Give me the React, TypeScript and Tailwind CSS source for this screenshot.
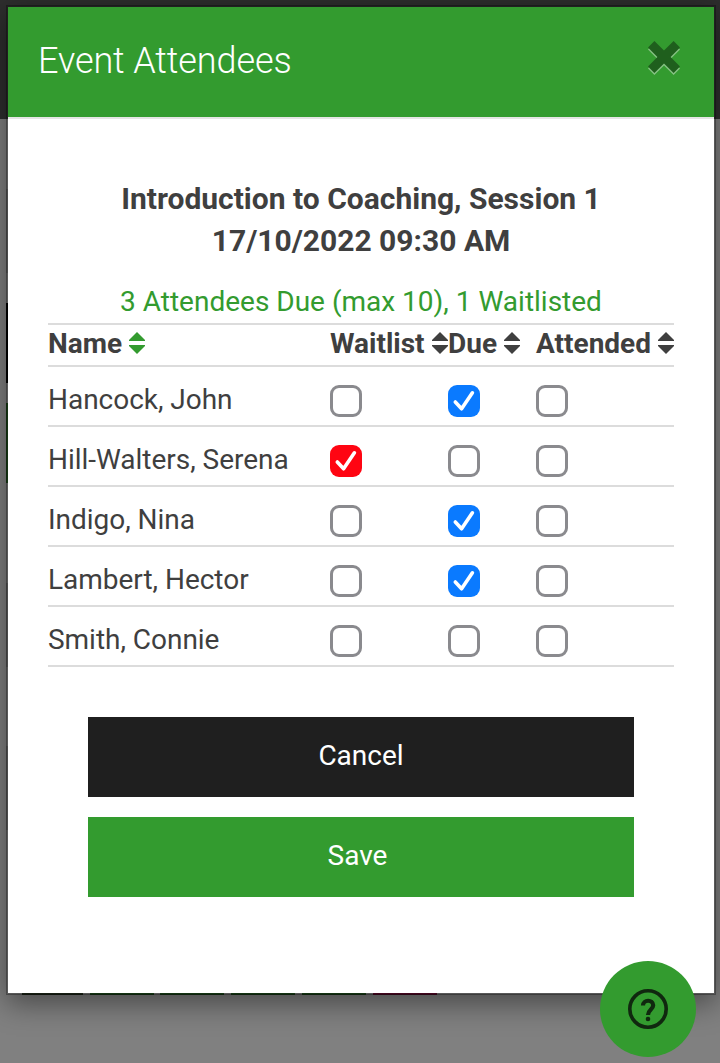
import { useState } from 'react';
import clsx from 'clsx';

type Field = 'waitlist' | 'due' | 'attended';

type Attendee = {
  name: string;
  waitlist: boolean;
  due: boolean;
  attended: boolean;
};

const initialAttendees: Attendee[] = [
  { name: 'Hancock, John', waitlist: false, due: true, attended: false },
  { name: 'Hill-Walters, Serena', waitlist: true, due: false, attended: false },
  { name: 'Indigo, Nina', waitlist: false, due: true, attended: false },
  { name: 'Lambert, Hector', waitlist: false, due: true, attended: false },
  { name: 'Smith, Connie', waitlist: false, due: false, attended: false },
];

function SortIcon({ className }: { className?: string }) {
  return (
    <svg
      viewBox="0 0 16 22"
      fill="currentColor"
      className={clsx('-mt-0.5 h-[22px] w-4 shrink-0', className)}
    >
      <path d="M8 0 16 8V9H0V8Z" />
      <path d="M8 22 16 14V13H0V14Z" />
    </svg>
  );
}

function Checkbox({
  checked,
  color = 'blue',
  label,
  onChange,
}: {
  checked: boolean;
  color?: 'blue' | 'red';
  label: string;
  onChange: () => void;
}) {
  return (
    <button
      role="checkbox"
      aria-checked={checked}
      aria-label={label}
      onClick={onChange}
      className={clsx(
        'mt-0.5 block size-8 rounded-[9px]',
        !checked && 'border-[3px] border-[#8a8a8e] bg-white',
        checked && color === 'blue' && 'bg-[#0a7aff]',
        checked && color === 'red' && 'bg-[#ff0512]',
      )}
    >
      {checked && (
        <svg viewBox="0 0 32 32" fill="none" className="size-8">
          <path
            d="M7.3 17 13.6 23.8 24.4 7.8"
            stroke="white"
            strokeWidth="3.6"
            strokeLinecap="round"
            strokeLinejoin="round"
          />
        </svg>
      )}
    </button>
  );
}

// Page behind the dialog, already dimmed
function Backdrop() {
  return (
    <div className="absolute inset-0 flex flex-col bg-[#808080]">
      <div className="h-[119px] bg-[#2e2e2e]" />
      <div className="mx-1 flex h-[902px] flex-col px-0.5">
        <div className="mt-[70px] h-[84px] bg-[#6c6c6c]" />
        <div className="mt-[30px] h-20 bg-black" />
        <div className="mt-5 h-20 bg-[#1f4a1c]" />
        <div className="mt-[100px] h-[84px] bg-[#6c6c6c]" />
        <div className="mt-[79px] h-[84px] bg-[#6c6c6c]" />
        <div className="mt-auto mb-[26px] flex h-10 pl-4">
          <div className="mr-[7px] w-[61px] bg-[#222c1c]" />
          <div className="mr-1.5 w-16 bg-[#1f4a1c]" />
          <div className="mr-[7px] w-16 bg-[#1f4a1c]" />
          <div className="mr-[7px] w-16 bg-[#1f4a1c]" />
          <div className="mr-[7px] w-16 bg-[#1f4a1c]" />
          <div className="w-16 bg-[#5e0a2c]" />
        </div>
      </div>
    </div>
  );
}

export default function App() {
  const [attendees, setAttendees] = useState(initialAttendees);

  const toggle = (index: number, field: Field) => {
    setAttendees((prev) =>
      prev.map((a, i) => (i === index ? { ...a, [field]: !a[field] } : a)),
    );
  };

  return (
    <div className="relative h-[1063px] w-[720px] overflow-hidden font-[Roboto,sans-serif] text-[28px] text-[#3f3f3f]">
      <Backdrop />

      <div className="relative pt-[5px] pl-1.5">
        <div className="h-[990px] w-[710px] border-2 border-black/30 bg-white bg-clip-padding shadow-[0_8px_28px_rgba(0,0,0,0.45)]">
          <header className="flex h-28 items-center justify-between border-b-2 border-[#e5e5e5] bg-[#339b2f] pr-[34px] pl-[30px]">
            <h1 className="-mt-[3px] text-[36px] font-light tracking-[-0.1px] text-white">
              Event Attendees
            </h1>
            <button aria-label="Close" className="-mt-2">
              <svg viewBox="0 0 32 34" className="h-[34px] w-8">
                <path
                  d="M6.4 0 16 9.4 25.6 0 32 6.4 22.6 16 32 25.6 25.6 32 16 22.6 6.4 32 0 25.6 9.4 16 0 6.4Z"
                  fill="#85c182"
                  transform="translate(0 2)"
                />
                <path
                  d="M6.4 0 16 9.4 25.6 0 32 6.4 22.6 16 32 25.6 25.6 32 16 22.6 6.4 32 0 25.6 9.4 16 0 6.4Z"
                  fill="#1f5f1d"
                />
              </svg>
            </button>
          </header>

          <div className="px-10 pt-[59px]">
            <h2 className="text-center text-[30px] leading-[42px] font-bold">
              Introduction to Coaching, Session 1
              <br />
              17/10/2022 09:30 AM
            </h2>
            <p className="mt-[19px] text-center leading-[42px] text-[#339b2f]">
              3 Attendees Due (max 10), 1 Waitlisted
            </p>

            <div className="grid h-11 grid-cols-[282px_118px_88px_138px] items-center border-y-2 border-[#dcdcdc] pb-0.5 leading-[38px] font-bold whitespace-nowrap">
              <div className="flex items-center gap-[7px]">
                Name <SortIcon className="text-[#339b2f]" />
              </div>
              <div className="flex items-center gap-[7px]">
                Waitlist <SortIcon />
              </div>
              <div className="flex items-center gap-[7px]">
                Due <SortIcon />
              </div>
              <div className="flex items-center gap-[7px]">
                Attended <SortIcon />
              </div>
            </div>

            {attendees.map((a, i) => (
              <div
                key={a.name}
                className="grid h-[60px] grid-cols-[282px_118px_88px_138px] items-center border-b-2 border-[#dcdcdc] pt-2"
              >
                <span className="tracking-[-0.03px]">{a.name}</span>
                <Checkbox
                  label="Waitlist"
                  color="red"
                  checked={a.waitlist}
                  onChange={() => toggle(i, 'waitlist')}
                />
                <Checkbox
                  label="Due"
                  checked={a.due}
                  onChange={() => toggle(i, 'due')}
                />
                <Checkbox
                  label="Attended"
                  checked={a.attended}
                  onChange={() => toggle(i, 'attended')}
                />
              </div>
            ))}

            <div className="mt-[50px] flex flex-col gap-5 px-10 text-white">
              <button className="h-20 bg-[#1f1f1f] pb-0.5">Cancel</button>
              <button className="h-20 bg-[#339b2f] pr-[7px] pb-0.5">Save</button>
            </div>
          </div>
        </div>
      </div>

      <button
        aria-label="Help"
        className="absolute top-[961px] left-[600px] flex size-24 items-center justify-center rounded-full bg-[#339b2f] text-[#10280f]"
      >
        <svg viewBox="0 0 40 40" fill="none" className="size-10">
          <circle cx="20" cy="20" r="18.2" stroke="currentColor" strokeWidth="3.6" />
          <path
            d="M15 16.6C15 10.2 25.2 10.2 25.2 16.2C25.2 20.4 20 20.6 20 26"
            stroke="currentColor"
            strokeWidth="4.2"
          />
          <circle cx="20" cy="30" r="2.3" fill="currentColor" />
        </svg>
      </button>
    </div>
  );
}
